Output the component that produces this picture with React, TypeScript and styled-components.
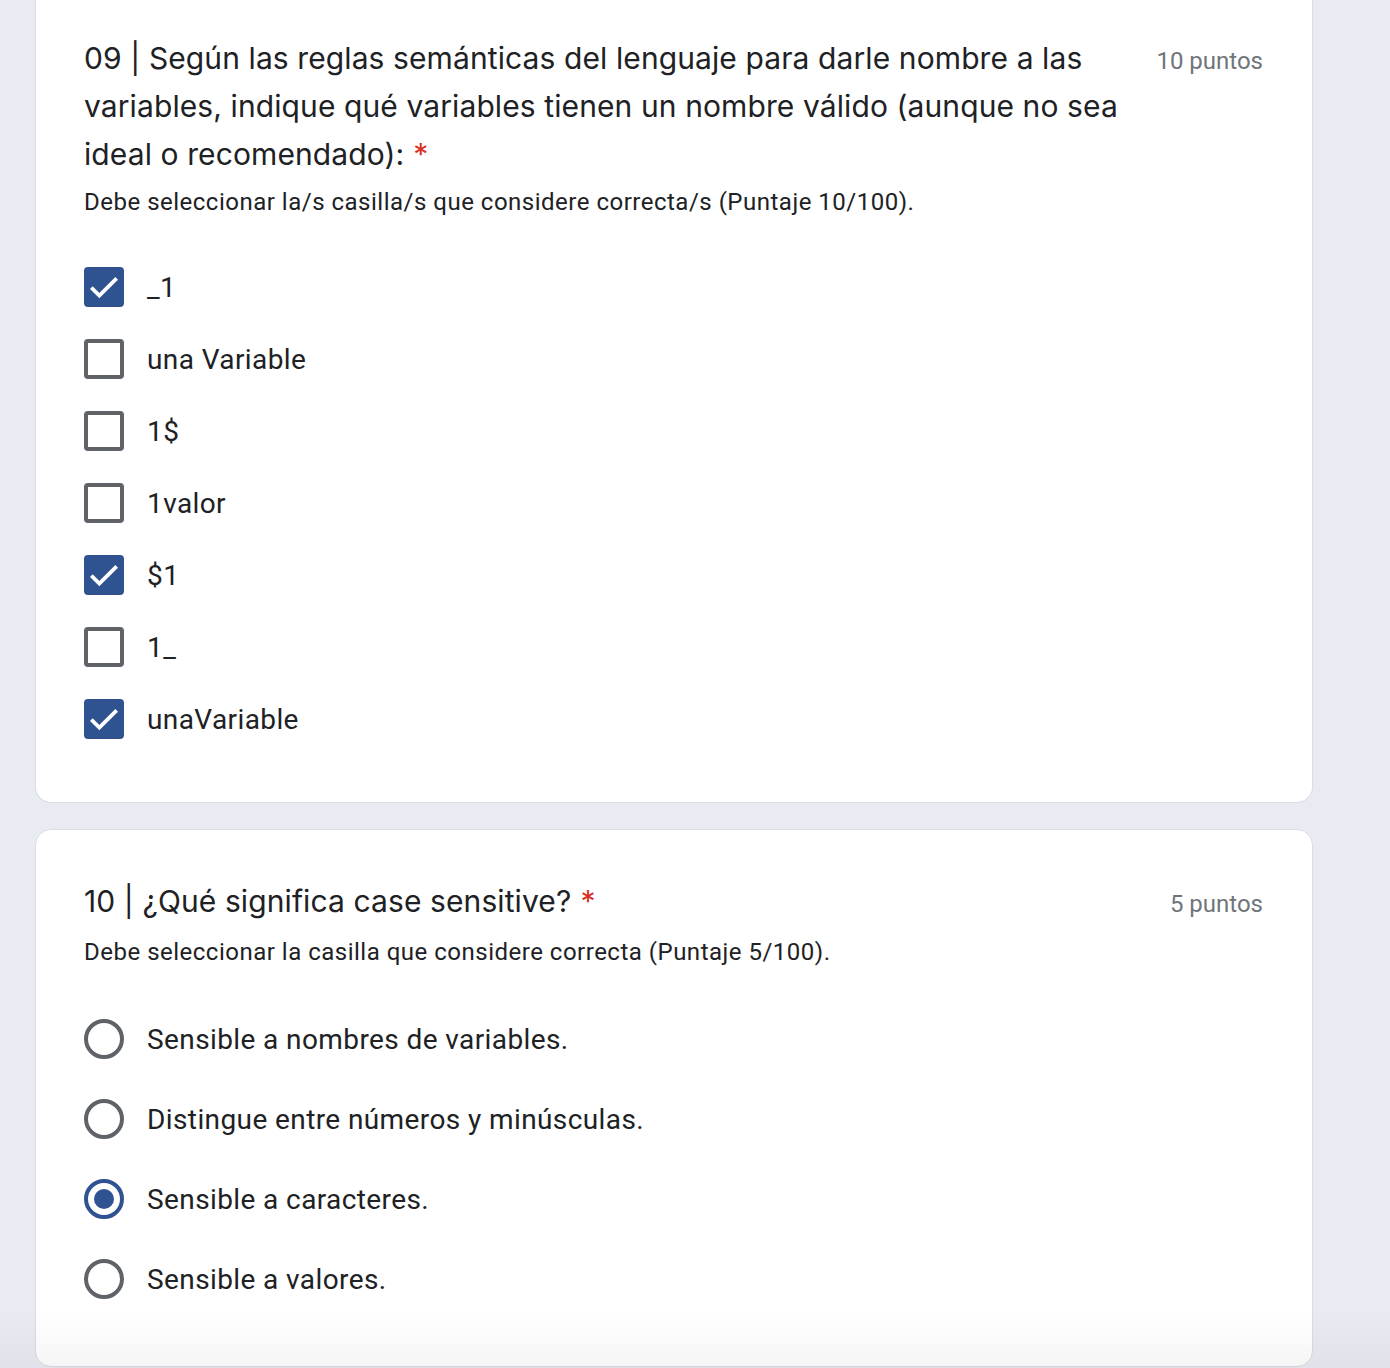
import styled, { createGlobalStyle } from "styled-components";

const GlobalStyle = createGlobalStyle`
  html, body {
    margin: 0;
    padding: 0;
    background: #e8ebf1;
  }
  body {
    font-family: Roboto, "Liberation Sans", Arial, sans-serif;
    color: #202124;
  }
`;

const Page = styled.div`
  width: 1390px;
  height: 1368px;
  overflow: hidden;
  display: flex;
  flex-direction: column;
  gap: 26px;
  padding-left: 35px;
  box-sizing: border-box;
  position: relative;
`;

const Card = styled.div<{ $cut?: boolean }>`
  width: 1278px;
  box-sizing: border-box;
  background: #ffffff;
  border: 1px solid #dadce0;
  border-top: ${(p) => (p.$cut ? "none" : "1px solid #dadce0")};
  border-radius: ${(p) => (p.$cut ? "0 0 16px 16px" : "16px")};
  padding: ${(p) => (p.$cut ? "34px" : "47px")} 49px 47px 48px;
`;

const Header = styled.div`
  display: flex;
  align-items: flex-start;
  justify-content: space-between;
  gap: 28px;
`;

const Title = styled.div`
  font-family: Inter, "Open Sans", sans-serif;
  font-size: 30px;
  line-height: 48px;
  letter-spacing: 0.1px;
  color: #202124;
  flex: 1;
`;

const Required = styled.span`
  color: #d93025;
  margin-left: 9px;
`;

const Points = styled.div`
  font-size: 24px;
  line-height: 48px;
  color: #70757a;
  white-space: nowrap;
  padding-top: 3px;
`;

const Description = styled.div`
  font-size: 24px;
  line-height: 32px;
  letter-spacing: 0.5px;
  margin-top: 8px;
  color: #202124;
`;

const Options = styled.div<{ $top: number }>`
  margin-top: ${(p) => p.$top}px;
  display: flex;
  flex-direction: column;
`;

const Row = styled.div<{ $h: number }>`
  display: flex;
  align-items: center;
  height: ${(p) => p.$h}px;
  gap: 23px;
`;

const Box = styled.div<{ $checked: boolean }>`
  width: 40px;
  height: 40px;
  box-sizing: border-box;
  border-radius: 4px;
  border: 4px solid ${(p) => (p.$checked ? "#2f5390" : "#5f6368")};
  background: ${(p) => (p.$checked ? "#2f5390" : "transparent")};
  display: flex;
  align-items: center;
  justify-content: center;
  flex-shrink: 0;
`;

const Radio = styled.div<{ $checked: boolean }>`
  width: 40px;
  height: 40px;
  box-sizing: border-box;
  border-radius: 50%;
  border: 4px solid ${(p) => (p.$checked ? "#2f5390" : "#5f6368")};
  display: flex;
  align-items: center;
  justify-content: center;
  flex-shrink: 0;
`;

const Dot = styled.div`
  width: 20px;
  height: 20px;
  border-radius: 50%;
  background: #2f5390;
`;

const Label = styled.span`
  font-size: 28px;
  letter-spacing: 0.4px;
  color: #202124;
`;

const BottomFade = styled.div`
  position: absolute;
  left: 0;
  right: 0;
  bottom: 0;
  height: 60px;
  background: linear-gradient(rgba(0, 0, 0, 0), rgba(0, 0, 0, 0.04));
  pointer-events: none;
`;

const Check = () => (
  <svg width="34" height="34" viewBox="0 0 24 24">
    <path d="M2.5 12.5l6 6L21.5 5.5" fill="none" stroke="#fff" strokeWidth="2.8" />
  </svg>
);

const checkOptions = [
  { label: "_1", checked: true },
  { label: "una Variable", checked: false },
  { label: "1$", checked: false },
  { label: "1valor", checked: false },
  { label: "$1", checked: true },
  { label: "1_", checked: false },
  { label: "unaVariable", checked: true },
];

const radioOptions = [
  { label: "Sensible a nombres de variables.", checked: false },
  { label: "Distingue entre números y minúsculas.", checked: false },
  { label: "Sensible a caracteres.", checked: true },
  { label: "Sensible a valores.", checked: false },
];

export default function App() {
  return (
    <>
      <GlobalStyle />
      <Page>
        <Card $cut>
          <Header>
            <Title>
              09 | Según las reglas semánticas del lenguaje para darle nombre a las
              variables, indique qué variables tienen un nombre válido (aunque no sea
              ideal o recomendado):<Required>*</Required>
            </Title>
            <Points>10 puntos</Points>
          </Header>
          <Description>
            Debe seleccionar la/s casilla/s que considere correcta/s (Puntaje 10/100).
          </Description>
          <Options $top={33}>
            {checkOptions.map((o) => (
              <Row key={o.label} $h={72}>
                <Box $checked={o.checked}>{o.checked && <Check />}</Box>
                <Label>{o.label}</Label>
              </Row>
            ))}
          </Options>
        </Card>
        <Card>
          <Header>
            <Title>
              10 | ¿Qué significa case sensitive?<Required>*</Required>
            </Title>
            <Points>5 puntos</Points>
          </Header>
          <Description>
            Debe seleccionar la casilla que considere correcta (Puntaje 5/100).
          </Description>
          <Options $top={31}>
            {radioOptions.map((o) => (
              <Row key={o.label} $h={80}>
                <Radio $checked={o.checked}>{o.checked && <Dot />}</Radio>
                <Label>{o.label}</Label>
              </Row>
            ))}
          </Options>
        </Card>
        <BottomFade />
      </Page>
    </>
  );
}
